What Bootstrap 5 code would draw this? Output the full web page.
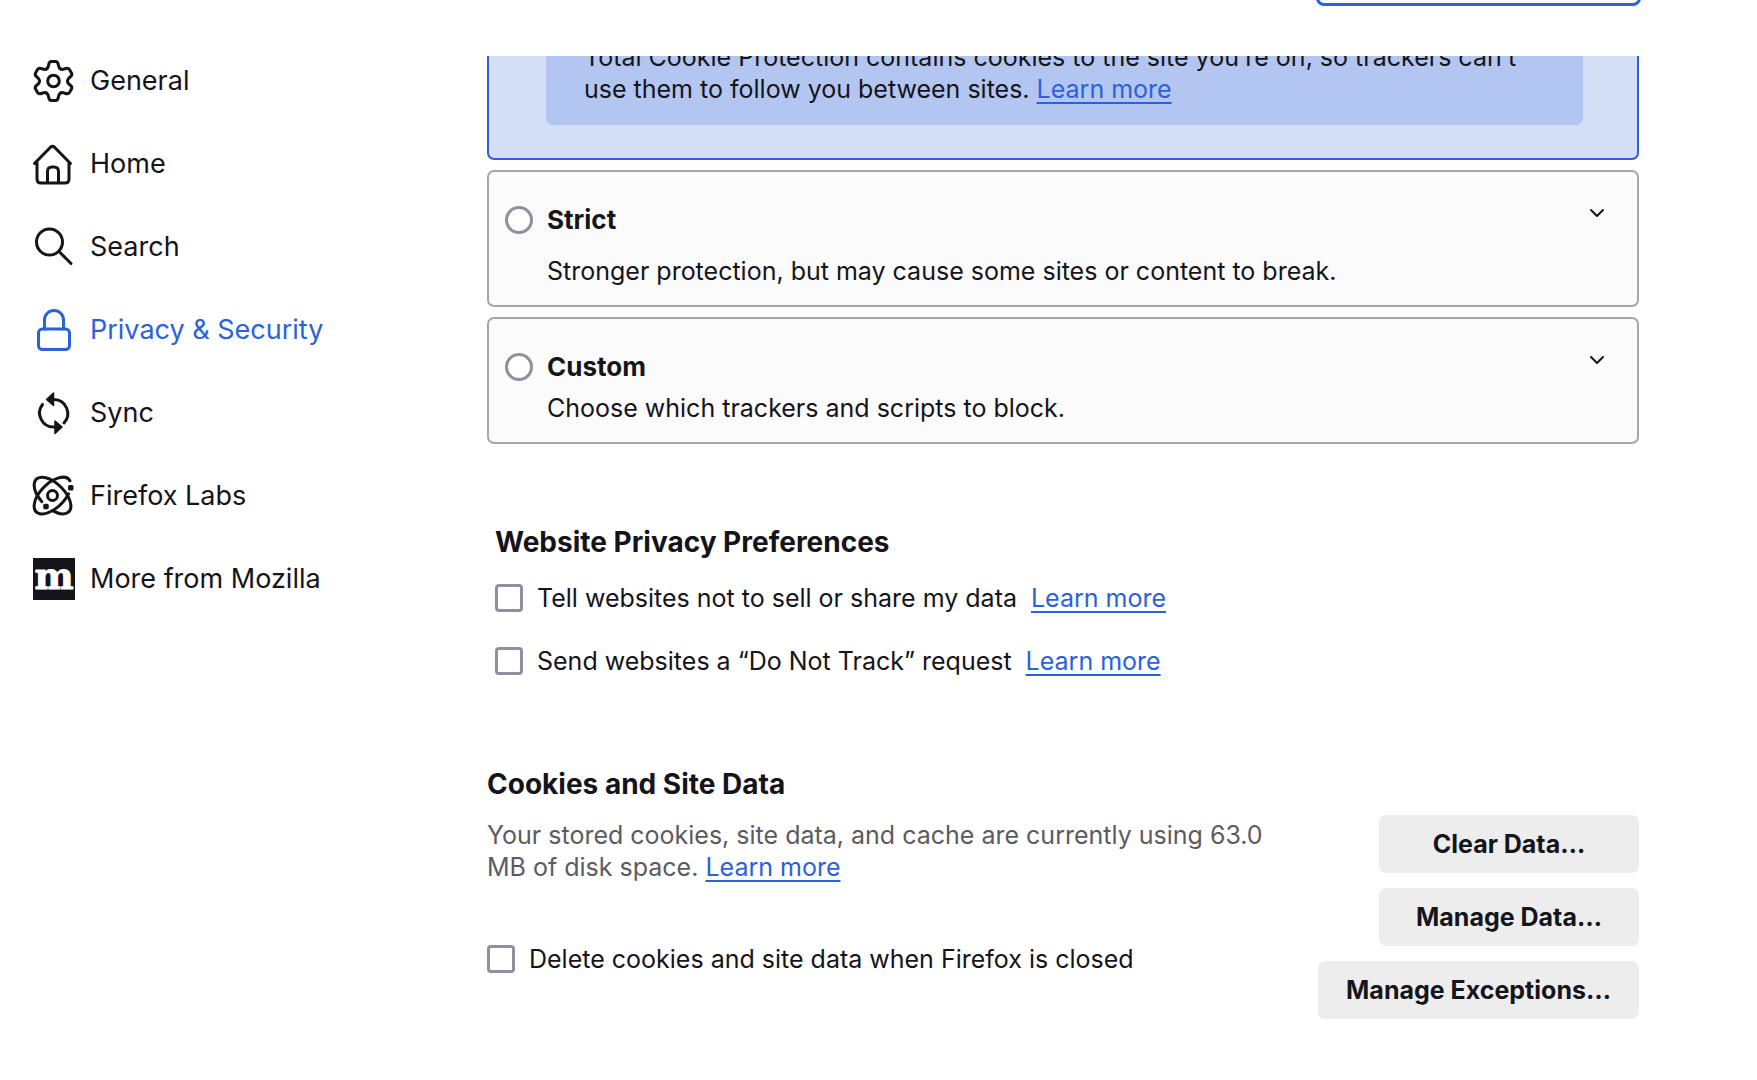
<!DOCTYPE html>
<html lang="en">
<head>
<meta charset="utf-8">
<meta name="viewport" content="width=device-width, initial-scale=1">
<title>Settings</title>
<link href="https://cdn.jsdelivr.net/npm/bootstrap@5.3.0/dist/css/bootstrap.min.css" rel="stylesheet">
<style>
  :root { --ink: #15141a; --accent: #2a62dc; --control: #8f8f9d; }
  body { font-family: Inter, "Liberation Sans", sans-serif; font-size: 25px; line-height: 32px; color: var(--ink); background: #fff; }
  a { color: var(--accent); }
  .learn { color: var(--accent); text-decoration-thickness: 2px; text-underline-offset: 4px; white-space: nowrap; }
  .side-pane { width: 487px; padding: 39px 0 0 33px; }
  .side-pane .nav-link { color: var(--ink); font-size: 27px; height: 83px; gap: 15px; }
  .side-pane .nav-link.active { color: var(--accent); }
  .side-pane svg { width: 42px; height: 42px; flex: none; overflow: visible; fill: none; stroke: currentColor; stroke-width: 3; stroke-linecap: round; stroke-linejoin: round; }
  .main-pane { padding-right: 118px; }
  .search-strip { height: 56px; padding-bottom: 50px; }
  .search-strip .form-control { width: 325px; height: 58px; flex: none; border: 3px solid var(--accent); border-radius: 8px; margin-right: -2px; }
  .scrolled { height: 104px; }
  .option { border: 2px solid #a6a6a8; border-radius: 7px; background: #fbfbfb; }
  .option-on { border-color: var(--accent); background: #d4def7; padding: 0 54px 33px 57px; }
  .note { background: #b2c6f1; border-radius: 7px; padding: 24px 38px 20px; }
  .option-off { margin-top: 10px; padding: 31px 30px 18px 16px; }
  .option-off .form-check-input { width: 28px; height: 28px; margin: 0; border: 3px solid var(--control); background: #fff; }
  .option-head { gap: 14px; }
  .option-head label { font-size: 26px; }
  .option-off p { padding-left: 42px; margin: 8px 0 0; }
  .option-roomy p { margin-top: 18px; }
  .chev { width: 20px; height: 20px; color: var(--ink); margin-bottom: 14px; }
  .tick { gap: 14px; }
  .tick .form-check-input { width: 28px; height: 28px; margin: 0; border: 3px solid var(--control); border-radius: 4px; flex: none; }
  .group-title { font-size: 28px; line-height: 34px; font-weight: 700; margin: 0; }
  .web-prefs { padding: 81px 0 0 8px; }
  .tick-list { gap: 31px; margin-top: 23px; }
  .site-data { padding-top: 90px; }
  .site-row { margin-top: 14px; }
  .site-text { padding-top: 4px; gap: 60px; }
  .muted { color: #5b5b60; max-width: 800px; }
  .btn-plain { --bs-btn-bg: #ededee; --bs-btn-color: var(--ink); --bs-btn-hover-bg: #e0e0e2; font-size: 25px; line-height: 32px; font-weight: 700; border: 0; border-radius: 7px; min-width: 260px; padding: 13px 28px; }
  .btn-stack { gap: 15px; }
</style>
</head>
<body>
<div class="d-flex vh-100 overflow-hidden">
  <aside class="side-pane flex-shrink-0">
    <nav class="nav flex-column" aria-label="Categories">
      <a class="nav-link p-0 d-flex align-items-center" href="#general">
        <svg viewBox="-20.5 -21 42 42" aria-hidden="true">
          <defs><path id="tooth" d="M-7-12.1C-5.200-13.100-5.200-14-4.900-16C-4.500-18.800-3.700-19.600-2-19.600H2C3.700-19.600 4.500-18.800 4.900-16C5.200-14 5.200-13.100 7-12.1"/></defs>
          <circle r="5.800"/>
          <use href="#tooth"/><use href="#tooth" transform="rotate(60)"/><use href="#tooth" transform="rotate(120)"/>
          <use href="#tooth" transform="rotate(180)"/><use href="#tooth" transform="rotate(240)"/><use href="#tooth" transform="rotate(300)"/>
        </svg>General</a>
      <a class="nav-link p-0 d-flex align-items-center" href="#home">
        <svg viewBox="0 0 42 42" aria-hidden="true"><path d="M1.5 20.500L17.500 4.200Q19.500 2.500 21.500 4.200L37.500 20.500M4 19V36Q4 40 8 40H32Q36 40 36 36V19M14.500 39V28.500Q14.500 24 19 24H21Q25.500 24 25.500 28.500V39"/></svg>Home</a>
      <a class="nav-link p-0 d-flex align-items-center" href="#search">
        <svg viewBox="0 0 42 42" aria-hidden="true"><circle cx="16.500" cy="16" r="13"/><path d="M26 25.500L38 37.500"/></svg>Search</a>
      <a class="nav-link active p-0 d-flex align-items-center" href="#privacy" aria-current="page">
        <svg viewBox="0 0 42 42" aria-hidden="true"><rect x="5.500" y="20" width="31" height="20.500" rx="4"/><path d="M11.500 20V11A9.500 9.500 0 0 1 30.500 11V20"/></svg>Privacy &amp; Security</a>
      <a class="nav-link p-0 d-flex align-items-center" href="#sync">
        <svg viewBox="0 0 42 42" aria-hidden="true"><path d="M21 7.500A14 14 0 0 1 31 31M9.500 12.500A14 14 0 0 0 21 35"/><path fill="currentColor" stroke-width="1.500" d="M20.500 1V13.500L13.500 7.500ZM22 29V41.500L29 35Z"/></svg>Sync</a>
      <a class="nav-link p-0 d-flex align-items-center" href="#labs">
        <svg viewBox="0 0 42 42" aria-hidden="true">
          <g transform="translate(19.500 20.500)">
            <path transform="rotate(45)" d="M-3.200 11.900A23 12 0 1 1 10.800 10.600"/>
            <path transform="rotate(-45)" d="M12.500 10.100A23 12 0 1 1 22.700 1.900"/>
            <circle r="5"/>
            <g fill="currentColor" stroke="none"><rect x="15.500" y="-10.500" width="5.500" height="5.500" rx="1.500"/><rect x="-9.300" y="8.300" width="5.500" height="5.500" rx="1.500"/></g>
          </g>
        </svg>Firefox Labs</a>
      <a class="nav-link p-0 d-flex align-items-center" href="#more">
        <svg viewBox="0 0 42 42" aria-hidden="true"><rect width="42" height="42" fill="#15141a" stroke="none"/><text x="21" y="31" text-anchor="middle" fill="#fff" stroke="#fff" style="stroke-width:1px" font-family="DejaVu Serif" font-weight="700" font-size="37">m</text></svg>More from Mozilla</a>
    </nav>
  </aside>

  <main class="main-pane flex-grow-1">
    <div class="search-strip d-flex flex-column justify-content-end align-items-end">
      <input class="form-control" type="search" aria-label="Find in Settings">
    </div>

    <div class="scrolled overflow-hidden d-flex align-items-end">
      <section class="option option-on w-100">
        <div class="note">Total Cookie Protection contains cookies to the site you’re on, so trackers can’t use them to follow you between sites. <a class="learn" href="#tcp">Learn more</a></div>
      </section>
    </div>

    <section class="option option-off option-roomy">
      <div class="option-head d-flex align-items-center">
        <input class="form-check-input" type="radio" name="level" id="strict">
        <label class="fw-bold flex-grow-1" for="strict">Strict</label>
        <button class="btn p-0 border-0 lh-1" type="button" aria-label="Expand Strict"><svg class="chev" viewBox="0 0 20 20" fill="none" stroke="currentColor" stroke-width="2" stroke-linecap="round" stroke-linejoin="round" aria-hidden="true"><path d="M4 7l6 6 6-6"/></svg></button>
      </div>
      <p>Stronger protection, but may cause some sites or content to break.</p>
    </section>

    <section class="option option-off">
      <div class="option-head d-flex align-items-center">
        <input class="form-check-input" type="radio" name="level" id="custom">
        <label class="fw-bold flex-grow-1" for="custom">Custom</label>
        <button class="btn p-0 border-0 lh-1" type="button" aria-label="Expand Custom"><svg class="chev" viewBox="0 0 20 20" fill="none" stroke="currentColor" stroke-width="2" stroke-linecap="round" stroke-linejoin="round" aria-hidden="true"><path d="M4 7l6 6 6-6"/></svg></button>
      </div>
      <p>Choose which trackers and scripts to block.</p>
    </section>

    <section class="web-prefs">
      <h2 class="group-title">Website Privacy Preferences</h2>
      <div class="tick-list d-flex flex-column">
        <div class="tick d-flex align-items-center">
          <input class="form-check-input" type="checkbox" id="gpc"><label for="gpc">Tell websites not to sell or share my data</label><a class="learn" href="#gpc-info">Learn more</a>
        </div>
        <div class="tick d-flex align-items-center">
          <input class="form-check-input" type="checkbox" id="dnt"><label for="dnt">Send websites a “Do Not Track” request</label><a class="learn" href="#dnt-info">Learn more</a>
        </div>
      </div>
    </section>

    <section class="site-data">
      <h2 class="group-title">Cookies and Site Data</h2>
      <div class="site-row d-flex justify-content-between align-items-start">
        <div class="site-text d-flex flex-column">
          <p class="muted mb-0">Your stored cookies, site data, and cache are currently using 63.0 MB of disk space. <a class="learn" href="#storage">Learn more</a></p>
          <div class="tick d-flex align-items-center">
            <input class="form-check-input" type="checkbox" id="wipe"><label for="wipe">Delete cookies and site data when Firefox is closed</label>
          </div>
        </div>
        <div class="btn-stack d-flex flex-column align-items-end">
          <button class="btn btn-plain" type="button">Clear Data…</button>
          <button class="btn btn-plain" type="button">Manage Data…</button>
          <button class="btn btn-plain" type="button">Manage Exceptions…</button>
        </div>
      </div>
    </section>
  </main>
</div>
<script src="https://cdn.jsdelivr.net/npm/bootstrap@5.3.0/dist/js/bootstrap.bundle.min.js"></script>
</body>
</html>
